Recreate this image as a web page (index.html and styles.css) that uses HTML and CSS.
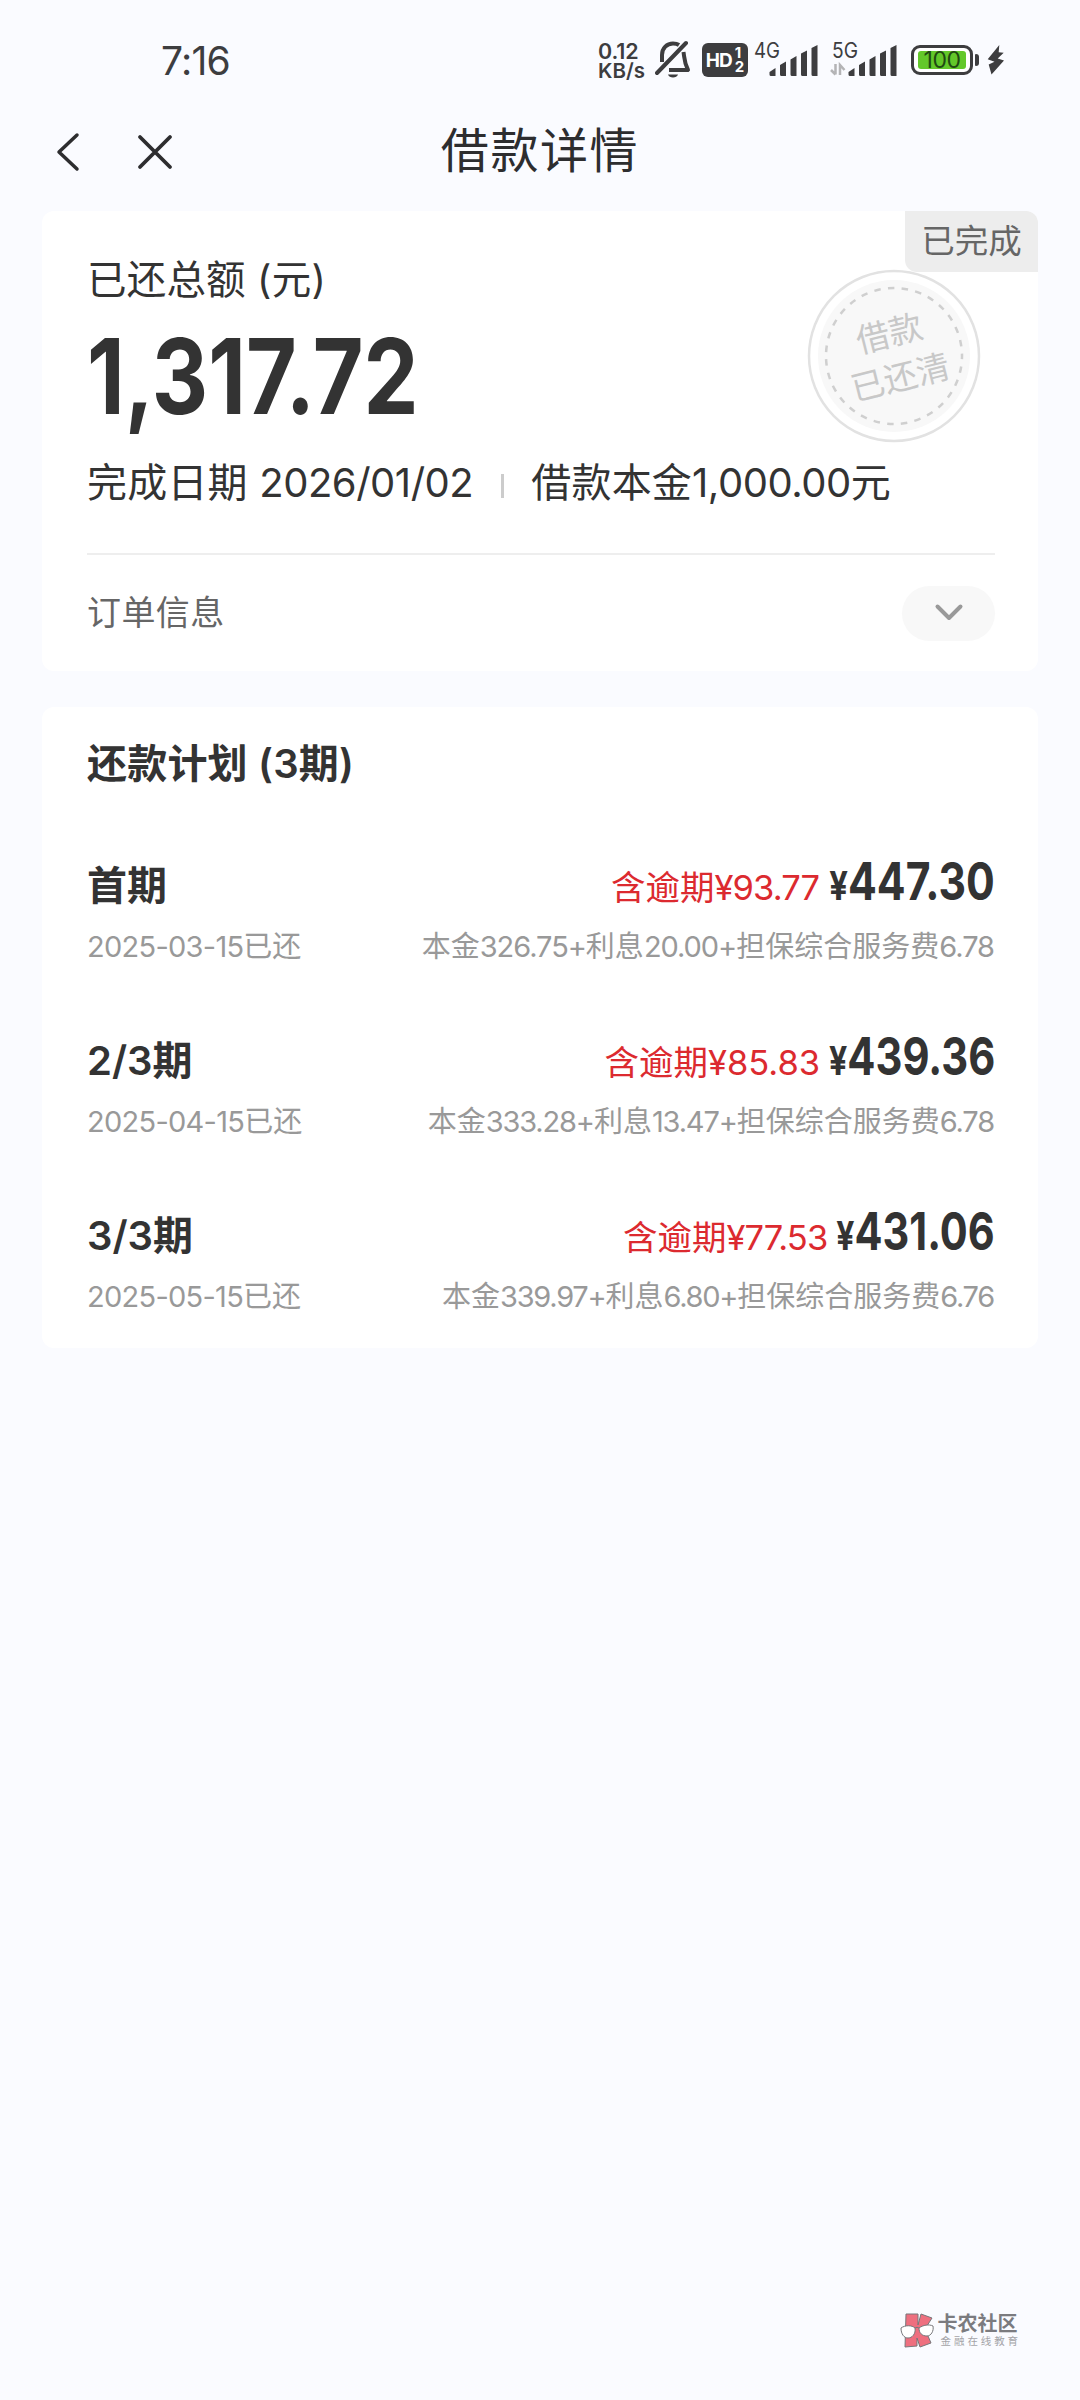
FILE: index.html
```
<!DOCTYPE html>
<html lang="zh-CN">
<head>
<meta charset="utf-8">
<title>借款详情</title>
<link rel="stylesheet" href="styles.css">
</head>
<body>
<header class="status">
  <span class="clock">7:16</span>
  <div class="status-icons">
    <div class="speed"><span class="speed-value">0.12</span><span class="speed-unit">KB/s</span></div>
    <svg class="ic-bell" width="37" height="40" viewBox="0 0 37 40" fill="none" stroke="#3d3d3f" stroke-width="4">
      <path d="M2 33L31 3" stroke-linecap="round"/>
      <path d="M7 22V15C7 8 12 3.5 18 3.5C20.500 3.500 22.500 4 24 5"/>
      <path d="M28.500 12C29.500 18 29 22 33 30H14" stroke-linejoin="round"/>
      <path d="M13 34.500H23C22 38.500 14 38.500 13 34.500Z" fill="#3d3d3f" stroke="none"/>
    </svg>
    <div class="hd"><span>HD</span><span class="hd-nums"><i>1</i><i>2</i></span></div>
    <svg class="ic-4g" width="64" height="36" viewBox="0 0 64 36" fill="#3d3d3f">
      <text class="net" x="0" y="16" textLength="26" lengthAdjust="spacingAndGlyphs">4G</text>
      <path d="M15.500 30L21.500 26V34H17Q15.500 34 15.500 32.500ZM26 23L32 19.500V34H27.500Q26 34 26 32.500ZM36.500 17.500L42.500 14V34H38Q36.500 34 36.500 32.500ZM47 11.500L53 8.500V34H48.500Q47 34 47 32.500ZM57.500 6L63.500 3V34H59Q57.500 34 57.500 32.500Z"/>
    </svg>
    <svg class="ic-5g" width="67" height="36" viewBox="0 0 67 36" fill="#3d3d3f">
      <text class="net" x="2" y="16" textLength="26" lengthAdjust="spacingAndGlyphs">5G</text>
      <path d="M5.500 22V32.500M1 28L5.500 32.500M10 33V23L14.500 28" fill="none" stroke="#b4b4b6" stroke-width="2.500"/>
      <path d="M18.500 30L24.500 26V34H20Q18.500 34 18.500 32.500ZM29 23L35 19.500V34H30.500Q29 34 29 32.500ZM39.500 17.500L45.500 14V34H41Q39.500 34 39.500 32.500ZM50 11.500L56 8.500V34H51.500Q50 34 50 32.500ZM60.500 6L66.500 3V34H62Q60.500 34 60.500 32.500Z"/>
    </svg>
    <div class="battery"><span class="battery-level">100</span></div>
    <svg class="ic-bolt" width="18" height="30" viewBox="0 0 18 30" fill="#3d3d3f"><path d="M12.300 0L0.700 14.300L7.500 16.700L1.700 19.500L4.500 29.500L17 15.500L10.700 13.500L16.700 7.700L11.700 7.300Z"/></svg>
  </div>
</header>
<nav class="nav">
  <svg class="ic-back" width="24" height="40" viewBox="0 0 24 40" fill="none" stroke="#2d2d2f" stroke-width="3.500" stroke-linecap="round" stroke-linejoin="round"><path d="M21 3L3 20L21 37"/></svg>
  <svg class="ic-close" width="36" height="36" viewBox="0 0 36 36" fill="none" stroke="#2d2d2f" stroke-width="3.800" stroke-linecap="round"><path d="M3 3L33 33M33 3L3 33"/></svg>
  <h1 class="nav-title">借款详情</h1>
</nav>
<main class="content">
  <section class="card summary">
    <div class="badge">已完成</div>
    <div class="stamp">
      <svg class="stamp-ring" width="174" height="174" viewBox="0 0 174 174">
        <circle cx="87" cy="87" r="85" fill="#fff" stroke="#e2e2e2" stroke-width="2.500"/>
        <circle cx="87" cy="87" r="76" fill="#f8f8f8"/>
        <circle cx="87" cy="87" r="68" fill="none" stroke="#cfcfcf" stroke-width="2.500" stroke-dasharray="6.500 7.285" stroke-dashoffset="3.250"/>
      </svg>
      <div class="stamp-text"><span>借款</span><span>已还清</span></div>
    </div>
    <div class="summary-label">已还总额 (元)</div>
    <div class="summary-amount">1,317.72</div>
    <div class="summary-meta"><span>完成日期 <b class="num">2026/01/02</b></span><i class="sep"></i><span>借款本金<b class="num">1,000.00</b>元</span></div>
    <div class="order">
      <span class="order-label">订单信息</span>
      <span class="order-toggle"><svg width="30" height="20" viewBox="0 0 30 20" fill="none" stroke="#999" stroke-width="4" stroke-linecap="round" stroke-linejoin="round"><path d="M3.500 3.500L15 15L26.500 3.500"/></svg></span>
    </div>
  </section>
  <section class="card plan">
    <h2 class="plan-title">还款计划 (3期)</h2>
    <ul class="periods">
      <li class="period first">
        <div class="main"><span class="name">首期</span><span class="overdue">含逾期<b class="num">¥93.77</b></span><span class="amount"><small>¥</small>447.30</span></div>
        <div class="detail"><span><b class="num">2025-03-15</b>已还</span><span class="parts">本金<b class="num">326.75+</b>利息<b class="num">20.00+</b>担保综合服务费<b class="num">6.78</b></span></div>
      </li>
      <li class="period second">
        <div class="main"><span class="name">2/3期</span><span class="overdue">含逾期<b class="num">¥85.83</b></span><span class="amount"><small>¥</small>439.36</span></div>
        <div class="detail"><span><b class="num">2025-04-15</b>已还</span><span class="parts">本金<b class="num">333.28+</b>利息<b class="num">13.47+</b>担保综合服务费<b class="num">6.78</b></span></div>
      </li>
      <li class="period third">
        <div class="main"><span class="name">3/3期</span><span class="overdue">含逾期<b class="num">¥77.53</b></span><span class="amount"><small>¥</small>431.06</span></div>
        <div class="detail"><span><b class="num">2025-05-15</b>已还</span><span class="parts">本金<b class="num">339.97+</b>利息<b class="num">6.80+</b>担保综合服务费<b class="num">6.76</b></span></div>
      </li>
    </ul>
  </section>
</main>
<footer class="watermark">
  <svg width="35" height="36" viewBox="0 0 35 36" stroke="#77777b" stroke-width="1">
    <path d="M6 1H18V12L21 1L32 5L25 16L31 30L20 34L17 25V33L5 34Z" fill="#ee6f7f"/>
    <path d="M1 15C5 12 12 12 15 15C16 21 12 25 8 25C4 25 1 21 1 15ZM19 15C23 12 29 11 33 13C34 18 31 23 27 23C22 23 19 20 19 15Z" fill="#fff"/>
    <path d="M15 15Q17 13.500 19 15" fill="none"/>
  </svg>
  <div class="watermark-text"><strong>卡农社区</strong><span>金融在线教育</span></div>
</footer>
</body>
</html>
```
FILE: styles.css
```
* { box-sizing: border-box; }

body {
  margin: 0;
  width: 1080px;
  min-height: 2400px;
  display: flex;
  flex-direction: column;
  background: #fafbff;
  color: #333;
  font-family: Inter, "Noto Sans CJK SC", sans-serif;
  white-space: nowrap;
}

h1, h2, ul { margin: 0; padding: 0; list-style: none; }
i { font-style: normal; }
.num { font-weight: 400; letter-spacing: -0.025em; }

/* status bar */
.status {
  height: 100px;
  padding: 20px 75px 0 161px;
  display: flex;
  justify-content: space-between;
  align-items: center;
  color: #3d3d3f;
}
.clock { font-size: 39px; line-height: 80px; letter-spacing: -0.8px; padding-top: 1px; }
.status-icons { display: flex; align-items: center; }
.speed {
  width: 49px;
  padding-top: 2px;
  display: flex;
  flex-direction: column;
  font-size: 21.500px;
  font-weight: 600;
  line-height: 19px;
}
.speed-value { letter-spacing: -0.1px; }
.speed-unit { font-size: 20.500px; }
.ic-bell { margin-left: 8px; }
.hd {
  width: 46px;
  height: 34px;
  margin-left: 10px;
  border-radius: 6px;
  background: #3d3d3f;
  color: #fff;
  display: flex;
  align-items: center;
  justify-content: center;
  gap: 3px;
  font-size: 19px;
  font-weight: 700;
  letter-spacing: -1px;
}
.hd-nums { display: flex; flex-direction: column; font-size: 15px; line-height: 14px; letter-spacing: 0; }
.net { font-size: 21px; }
.ic-4g, .ic-5g { overflow: visible; }
.ic-4g { margin-left: 6px; }
.ic-5g { margin-left: 12px; }
.battery {
  position: relative;
  width: 62px;
  height: 30px;
  margin-left: 14px;
  padding: 3px 4px;
  border: 3px solid #3d3d3f;
  border-radius: 9px;
  background: #fff;
}
.battery::after {
  content: "";
  position: absolute;
  right: -9px;
  top: 6px;
  width: 4px;
  height: 12px;
  border-radius: 1px 3px 3px 1px;
  background: #3d3d3f;
}
.battery-level {
  display: block;
  height: 18px;
  border-radius: 3px;
  background: #63c82a;
  color: #1f4a12;
  font-size: 23px;
  line-height: 18px;
  letter-spacing: -0.5px;
  text-align: center;
}
.ic-bolt { margin-left: 14px; }

/* navigation */
.nav {
  height: 103px;
  padding-left: 56px;
  display: grid;
  grid-template-columns: 81px 1fr;
  align-items: center;
  position: relative;
}
.nav-title {
  position: absolute;
  left: 0;
  right: 0;
  top: 21px;
  text-align: center;
  font-size: 48px;
  font-weight: 400;
  line-height: 60px;
  letter-spacing: 1.600px;
  color: #2d2d2f;
}

/* cards */
.content { padding: 8px 42px 0; display: flex; flex-direction: column; gap: 36px; }
.card { position: relative; border-radius: 12px; background: #fff; padding: 0 43px 0 45px; }

.summary { padding-top: 49px; }
.badge {
  position: absolute;
  right: 0;
  top: 0;
  width: 133px;
  height: 61px;
  border-radius: 0 12px 0 12px;
  background: #ededed;
  color: #666;
  font-size: 33.500px;
  line-height: 61px;
  text-align: center;
}
.stamp { position: absolute; left: 765px; top: 58px; width: 174px; height: 174px; }
.stamp-ring { display: block; }
.stamp-text {
  position: absolute;
  inset: 0 0 0 2px;
  display: flex;
  flex-direction: column;
  align-items: center;
  justify-content: center;
  transform: rotate(-14deg);
  color: #c8c8c8;
  font-size: 33.500px;
  line-height: 45px;
}
.summary-label { font-size: 39.500px; line-height: 40px; letter-spacing: 0.200px; }
.summary-amount {
  margin-top: 20px;
  font-size: 104px;
  font-weight: 700;
  line-height: 112px;
  transform: scaleX(0.84);
  transform-origin: left;
}
.summary-meta {
  margin-top: 31px;
  display: flex;
  align-items: center;
  font-size: 40px;
  line-height: 40px;
  letter-spacing: 0.200px;
}
.summary-meta .num { letter-spacing: -0.012em; }
.sep { width: 3px; height: 24px; margin: 6px 27px 0 28px; background: #ccc; }
.order {
  margin-top: 50px;
  height: 118px;
  border-top: 2px solid #eee;
  display: flex;
  align-items: center;
  justify-content: space-between;
}
.order-label { font-size: 34px; line-height: 40px; letter-spacing: 0.400px; color: #666; }
.order-toggle {
  width: 93px;
  height: 55px;
  border-radius: 28px;
  background: #f8f8f8;
  display: flex;
  align-items: center;
  justify-content: center;
}

.plan { padding-top: 37px; padding-bottom: 31px; }
.plan-title { font-size: 40px; font-weight: 600; line-height: 40px; letter-spacing: 0.200px; }
.periods { margin-top: 72px; display: flex; flex-direction: column; gap: 64px; }
.main { height: 60px; margin-bottom: 11px; display: flex; align-items: baseline; line-height: 52px; }
.name { font-size: 40px; font-weight: 600; margin-right: auto; }
.overdue { font-size: 34.500px; color: #dc2a2f; }
.amount { font-size: 52px; font-weight: 700; transform-origin: right; }
.amount small { font-size: 40px; }
.first .amount { margin-left: -26px; transform: scaleX(0.820); }
.second .amount { margin-left: -32.500px; transform: scaleX(0.802); }
.third .amount { margin-left: -31px; transform: scaleX(0.797); }
.second .overdue .num { letter-spacing: 0; }
.detail {
  padding-right: 1px;
  display: flex;
  justify-content: space-between;
  font-size: 29px;
  line-height: 40px;
  color: #999;
}
.parts .num { letter-spacing: -0.036em; }
.second .parts .num { letter-spacing: -0.040em; }
.third .parts .num { letter-spacing: -0.044em; }

/* community mark */
.watermark { margin: auto 59px 51px auto; display: flex; gap: 3px; }
.watermark-text { display: flex; flex-direction: column; color: #7b7b7f; }
.watermark-text strong { font-size: 20px; line-height: 22px; font-weight: 700; }
.watermark-text span { margin-left: 3px; font-size: 10.500px; line-height: 13px; letter-spacing: 2.900px; color: #a4a4a8; }
```
